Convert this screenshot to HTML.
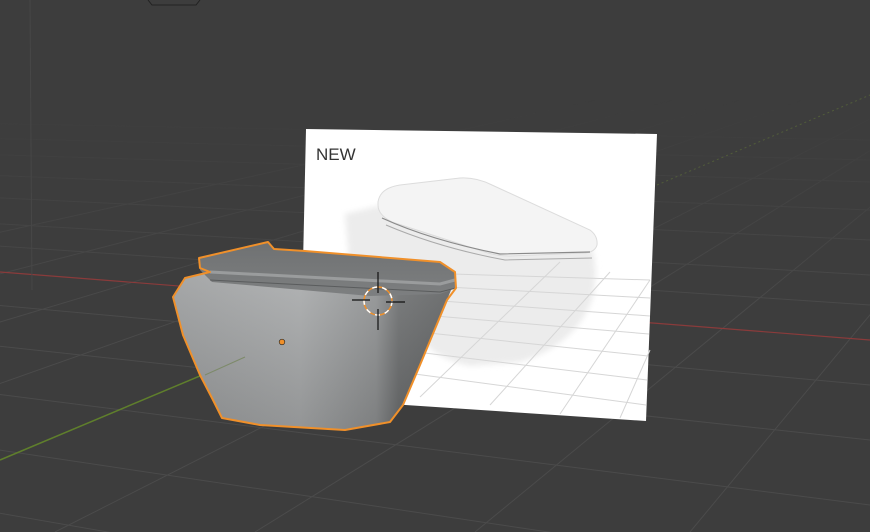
<!DOCTYPE html>
<html><head><style>
html,body{margin:0;padding:0;background:#3d3d3d;overflow:hidden;width:870px;height:532px}
svg{display:block;position:absolute;left:0;top:0}
</style></head><body>
<svg width="870" height="532" viewBox="0 0 870 532" xmlns="http://www.w3.org/2000/svg">
<defs>
<linearGradient id="body" x1="0" y1="0" x2="1" y2="0">
<stop offset="0" stop-color="#9a9c9d"/><stop offset="0.45" stop-color="#a7a9aa"/><stop offset="0.72" stop-color="#8e9091"/><stop offset="0.8" stop-color="#6c6e6f"/><stop offset="1" stop-color="#5e6061"/>
</linearGradient>
<linearGradient id="bodyv" x1="0" y1="0" x2="0" y2="1">
<stop offset="0" stop-color="#fff" stop-opacity="0.12"/><stop offset="1" stop-color="#000" stop-opacity="0.12"/>
</linearGradient>
<linearGradient id="lid" x1="0" y1="0" x2="0" y2="1">
<stop offset="0" stop-color="#6f7172"/><stop offset="1" stop-color="#7d7f80"/>
</linearGradient>
<linearGradient id="fg" gradientUnits="userSpaceOnUse" x1="0" y1="100" x2="0" y2="320">
<stop offset="0" stop-color="#fff" stop-opacity="0"/><stop offset="1" stop-color="#fff" stop-opacity="1"/>
</linearGradient>
<mask id="m"><rect width="870" height="532" fill="url(#fg)"/></mask>
<filter id="blur"><feGaussianBlur stdDeviation="3"/></filter>
</defs>
<rect width="870" height="532" fill="#3d3d3d"/>
<g mask="url(#m)">
<g stroke="#4b4b4b" stroke-width="1" fill="none">
<line x1="-2500" y1="77" x2="870" y2="140"/>
<line x1="-2500" y1="77" x2="870" y2="160"/>
<line x1="-2500" y1="77" x2="870" y2="182"/>
<line x1="-2500" y1="77" x2="870" y2="210"/>
<line x1="-2500" y1="77" x2="870" y2="240"/>
<line x1="-2500" y1="77" x2="870" y2="275"/>
<line x1="-2500" y1="77" x2="870" y2="305"/>
<line x1="-2500" y1="77" x2="870" y2="385"/>
<line x1="-2500" y1="77" x2="870" y2="440"/>
<line x1="-2500" y1="77" x2="870" y2="505"/>
<line x1="-2500" y1="77" x2="870" y2="580"/>
<line x1="-2500" y1="77" x2="870" y2="665"/>
<line x1="-2500" y1="77" x2="870" y2="765"/>
<line x1="1150" y1="-23" x2="-420" y2="532"/>
<line x1="1150" y1="-23" x2="55" y2="532"/>
<line x1="1150" y1="-23" x2="255" y2="532"/>
<line x1="1150" y1="-23" x2="475" y2="532"/>
<line x1="1150" y1="-23" x2="690" y2="532"/>
<line x1="1150" y1="-23" x2="890" y2="532"/>
<line x1="1150" y1="-23" x2="1070" y2="532"/>
<line x1="1150" y1="-23" x2="-700" y2="532"/>
<line x1="1150" y1="-23" x2="-1000" y2="532"/>
<line x1="1150" y1="-23" x2="-1350" y2="532"/>
</g>
</g>
<line x1="657" y1="185" x2="870" y2="95" stroke="#5a6a3a" stroke-width="1" stroke-dasharray="2 3" opacity="0.7"/>
<line x1="0" y1="272" x2="870" y2="340" stroke="#8a3b3b" stroke-width="1.2"/>
<line x1="0" y1="460" x2="245" y2="357" stroke="#5f7f2c" stroke-width="1.5"/>
<line x1="30" y1="0" x2="32" y2="290" stroke="#474747"/>
<path d="M148 0 L152 5 L196 5 L200 0" stroke="#222" fill="none"/>
<polygon points="306,129 657,134 646,421 300,398" fill="#ffffff"/>
<path d="M345 214 L378 206 L590 245 Q600 265 592 300 Q575 345 520 362 L470 366 Q440 360 420 340 L370 300 L350 270 Z" fill="#ececec" filter="url(#blur)"/>
<g stroke="#d6d6d6" stroke-width="1" fill="none">
<line x1="420" y1="273" x2="650" y2="280"/>
<line x1="410" y1="285" x2="650" y2="298"/>
<line x1="400" y1="298" x2="650" y2="316"/>
<line x1="400" y1="313" x2="649" y2="334"/>
<line x1="400" y1="330" x2="648" y2="356"/>
<line x1="400" y1="350" x2="647" y2="380"/>
<line x1="400" y1="372" x2="646" y2="405"/>
<line x1="560" y1="262" x2="420" y2="397"/>
<line x1="610" y1="272" x2="490" y2="405"/>
<line x1="650" y1="280" x2="560" y2="414"/>
<line x1="650" y1="350" x2="620" y2="418"/>
</g>
<path d="M378 202 Q380 188 400 185 L460 178 Q476 177 492 185 L590 230 Q598 236 597 245 Q595 252 585 253 L510 256 Q498 256 488 253 L392 222 Q378 215 378 205Z" fill="#f4f4f4" stroke="#dcdcdc" stroke-width="1"/>
<path d="M382 218 Q430 240 500 254 L590 252" stroke="#8a8a8a" stroke-width="1.2" fill="none"/>
<path d="M386 225 Q440 248 505 260 L592 258" stroke="#aaa" stroke-width="1" fill="none"/>
<text x="316" y="160" font-family="Liberation Sans, sans-serif" font-size="17" fill="#333">NEW</text>
<path d="M173 297 L185 278 L210 272 L380 278 L455 280 L447 300 L420 365 L403 405 L390 422 L345 430 L260 425 L222 418 L213 400 L200 375 L183 335 Z" fill="url(#body)"/>
<path d="M173 297 L185 278 L210 272 L380 278 L455 280 L447 300 L420 365 L403 405 L390 422 L345 430 L260 425 L222 418 L213 400 L200 375 L183 335 Z" fill="url(#bodyv)"/>
<path d="M199 258 L268 242 L274 249 L305 251 L440 262 L455 272 L456 288 L440 294 L370 296 L212 282 L200 270 Z" fill="url(#lid)"/>
<path d="M210 272 L440 284 L455 280" stroke="#9a9c9d" stroke-width="3" fill="none"/>
<path d="M210 280 L440 292 L456 288" stroke="#5a5c5d" stroke-width="1" fill="none"/>
<line x1="205" y1="375" x2="245" y2="357" stroke="#7d8a6a" stroke-width="1"/>
<path d="M199 258 L268 242 L274 249 L305 251 L440 262 L455 272 L456 288 L447 300 L420 365 L403 405 L390 422 L345 430 L260 425 L222 418 L213 400 L200 375 L183 335 L173 297 L185 278 L210 272 L200 268 Z" fill="none" stroke="#f0902a" stroke-width="2" stroke-linejoin="round"/>
<circle cx="282" cy="342" r="2.8" fill="#f0902a" stroke="#222" stroke-width="0.6"/>
<circle cx="378" cy="301" r="14" fill="none" stroke="#f0902a" stroke-width="1.5"/>
<circle cx="378" cy="301" r="14" fill="none" stroke="#fff" stroke-width="1.5" stroke-dasharray="5 5"/>
<g stroke="#111" stroke-width="1.2">
<line x1="378" y1="272" x2="378" y2="293"/><line x1="378" y1="309" x2="378" y2="330"/>
<line x1="352" y1="300" x2="370" y2="300"/><line x1="386" y1="302" x2="405" y2="302"/>
</g>
</svg>
</body></html>
